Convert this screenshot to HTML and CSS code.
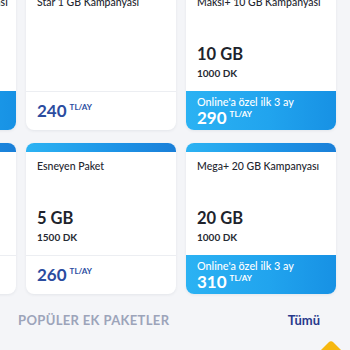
FILE: index.html
```html
<!DOCTYPE html>
<html lang="tr">
<head>
<meta charset="utf-8">
<link rel="stylesheet" href="styles.css">
</head>
<body>
<div class="screen">
  <div class="grid">
    <div class="card">
      <div class="band"></div>
      <div class="body">
        <div class="title">Gençlik+ 30 GB Kampanyası</div>
      </div>
      <div class="foot promo"></div>
    </div>
    <div class="card">
      <div class="band"></div>
      <div class="body">
        <div class="title">Star 1 GB Kampanyası</div>
      </div>
      <div class="foot plain">
        <div class="price">240<span class="unit">TL/AY</span></div>
      </div>
    </div>
    <div class="card">
      <div class="band"></div>
      <div class="body">
        <div class="title">Maksi+ 10 GB Kampanyası</div>
        <div class="amount">10 GB</div>
        <div class="minutes">1000 DK</div>
      </div>
      <div class="foot promo">
        <div class="promo-text">Online'a özel ilk 3 ay</div>
        <div class="price">290<span class="unit">TL/AY</span></div>
      </div>
    </div>

    <div class="card">
      <div class="band"></div>
      <div class="body"></div>
      <div class="foot plain"></div>
    </div>
    <div class="card">
      <div class="band"></div>
      <div class="body">
        <div class="title">Esneyen Paket</div>
        <div class="amount">5 GB</div>
        <div class="minutes">1500 DK</div>
      </div>
      <div class="foot plain">
        <div class="price">260<span class="unit">TL/AY</span></div>
      </div>
    </div>
    <div class="card">
      <div class="band"></div>
      <div class="body">
        <div class="title">Mega+ 20 GB Kampanyası</div>
        <div class="amount">20 GB</div>
        <div class="minutes">1000 DK</div>
      </div>
      <div class="foot promo">
        <div class="promo-text">Online'a özel ilk 3 ay</div>
        <div class="price">310<span class="unit">TL/AY</span></div>
      </div>
    </div>
  </div>

  <div class="section-head">
    <span class="section-title">POPÜLER EK PAKETLER</span>
    <span class="all">Tümü</span>
  </div>

  <svg class="chat-tip" width="20" height="10" viewBox="0 0 20 10">
    <path d="M0 10 L7.5 2.5 Q10 0 12.5 2.5 L20 10 Z" fill="#f6b70f"/>
  </svg>
</div>
</body>
</html>
```

FILE: styles.css
```css
* { box-sizing: border-box; }

html, body {
  margin: 0;
  padding: 0;
  background: #f4f5f8;
}

body {
  font-family: Lato, "Noto Sans", sans-serif;
  color: #222631;
}

.screen {
  position: relative;
  width: 350px;
  height: 350px;
  overflow: hidden;
  background: #f4f5f8;
}

.grid {
  display: grid;
  grid-template-columns: repeat(3, 150px);
  grid-auto-rows: 151px;
  column-gap: 10px;
  row-gap: 13px;
  margin-left: -134px;
  margin-top: -21px;
}

.card {
  display: flex;
  flex-direction: column;
  background: #fff;
  border-radius: 8px;
  overflow: hidden;
  box-shadow: 0 1px 3px rgba(40, 50, 80, 0.08);
}

.band {
  height: 9px;
  flex: none;
  background: linear-gradient(90deg, #2cb3f3 0%, #1d93e6 60%, #1a7fd8 100%);
}

.body {
  flex: 1;
  padding: 8px 11px 0;
  display: flex;
  flex-direction: column;
}

.title {
  font-size: 10.5px;
  line-height: 12px;
  font-weight: 500;
  color: #23262f;
  margin-bottom: auto;
  white-space: nowrap;
}

.amount {
  font-size: 16.5px;
  font-weight: 700;
  line-height: 20px;
  color: #20232c;
  margin-bottom: 2px;
}

.minutes {
  font-size: 10px;
  font-weight: 700;
  line-height: 14px;
  color: #262a33;
  margin-bottom: 11px;
}

.foot {
  height: 39px;
  flex: none;
  padding: 0 11px;
  display: flex;
  flex-direction: column;
  justify-content: center;
}

.foot.plain {
  border-top: 1px solid #eceef2;
}

.foot.promo {
  background: linear-gradient(90deg, #2bb2f3 0%, #21a4ee 55%, #1791e4 100%);
  color: #fff;
  justify-content: flex-start;
  padding-top: 4px;
}

.promo-text {
  font-size: 10.8px;
  line-height: 13px;
  font-weight: 500;
}

.price {
  font-size: 17px;
  font-weight: 700;
  line-height: 20px;
  color: #2b4c9f;
  display: flex;
  align-items: flex-start;
}

.promo .price {
  color: #fff;
}

.unit {
  font-size: 8px;
  font-weight: 700;
  line-height: 10px;
  margin-left: 3px;
  margin-top: 1px;
}

.section-head {
  display: flex;
  justify-content: space-between;
  align-items: center;
  padding: 0 30px 0 18px;
  margin-top: 18px;
}

.section-title {
  font-size: 13px;
  font-weight: 700;
  letter-spacing: 0.35px;
  color: #9ca4ba;
}

.all {
  font-size: 13px;
  font-weight: 700;
  color: #28398c;
}

.chat-tip {
  position: absolute;
  left: 321px;
  bottom: 0;
}
```
